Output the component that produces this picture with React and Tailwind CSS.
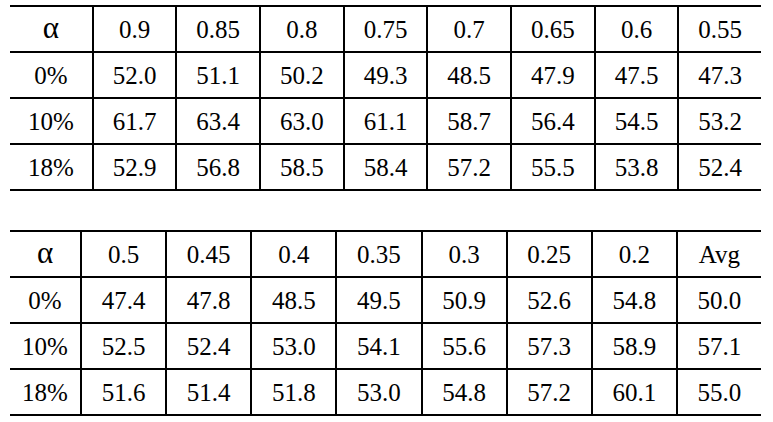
import React from "react";

const TOP = {
  head: ["α", "0.9", "0.85", "0.8", "0.75", "0.7", "0.65", "0.6", "0.55"],
  rows: [
    ["0%", "52.0", "51.1", "50.2", "49.3", "48.5", "47.9", "47.5", "47.3"],
    ["10%", "61.7", "63.4", "63.0", "61.1", "58.7", "56.4", "54.5", "53.2"],
    ["18%", "52.9", "56.8", "58.5", "58.4", "57.2", "55.5", "53.8", "52.4"],
  ],
};

const BOTTOM = {
  head: ["α", "0.5", "0.45", "0.4", "0.35", "0.3", "0.25", "0.2", "Avg"],
  rows: [
    ["0%", "47.4", "47.8", "48.5", "49.5", "50.9", "52.6", "54.8", "50.0"],
    ["10%", "52.5", "52.4", "53.0", "54.1", "55.6", "57.3", "58.9", "57.1"],
    ["18%", "51.6", "51.4", "51.8", "53.0", "54.8", "57.2", "60.1", "55.0"],
  ],
};

const Row = ({ cells, narrowFirst }) => (
  <div className="flex h-[46px] border-t-2 border-black">
    {cells.map((c, i) => (
      <div
        key={i}
        className={`flex items-center justify-center ${
          i === 0 ? (narrowFirst ? "w-[70px] shrink-0" : "flex-1") : "flex-1 border-l-2 border-black"
        } ${c === "α" ? "text-[31px] pb-[3px]" : ""}`}
      >
        {c}
      </div>
    ))}
  </div>
);

const Table = ({ data, narrowFirst }) => (
  <div className="w-[751px] border-b-2 border-black">
    <Row cells={data.head} narrowFirst={narrowFirst} />
    {data.rows.map((r, i) => (
      <Row key={i} cells={r} narrowFirst={narrowFirst} />
    ))}
  </div>
);

export default function App() {
  return (
    <div className="w-[773px] h-[422px] bg-white pl-[10px] pt-[5px] font-['Liberation_Serif',serif] text-[25px] leading-none text-black">
      <Table data={TOP} />
      <div className="mt-[39px]">
        <Table data={BOTTOM} narrowFirst />
      </div>
    </div>
  );
}
